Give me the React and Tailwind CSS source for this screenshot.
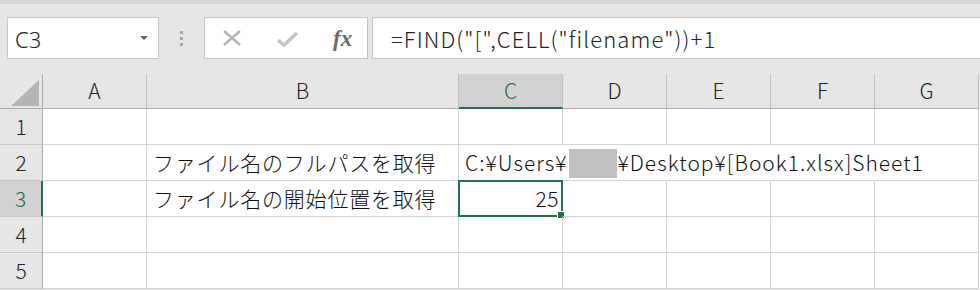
import React from "react";

const cols = [
  { k: "A", w: "w-[104px]" },
  { k: "B", w: "w-[312px]" },
  { k: "C", w: "w-[104px]" },
  { k: "D", w: "w-[104px]" },
  { k: "E", w: "w-[104px]" },
  { k: "F", w: "w-[104px]" },
  { k: "G", w: "w-[104px]" },
];

const jp = { fontFamily: '"Noto Sans CJK JP", "Noto Sans", sans-serif' };

function Cell({ row, col }) {
  const noRight = row === 2 && ["C", "D", "E", "F"].includes(col.k);
  let content = null;

  if (col.k === "B" && row === 2) content = "ファイル名のフルパスを取得";
  if (col.k === "B" && row === 3) content = "ファイル名の開始位置を取得";

  if (col.k === "C" && row === 2) {
    content = (
      <span className="whitespace-nowrap tracking-[1px]">
        C:¥Users¥
        <span className="inline-block w-[48px] h-[29px] bg-[#c0c0c0] align-[-7px] ml-[1px] mr-[1px]" />
        ¥Desktop¥[Book1.xlsx]Sheet1
      </span>
    );
  }

  const selected = col.k === "C" && row === 3;

  return (
    <div
      className={`relative h-full shrink-0 ${col.w} border-b border-[#d4d4d4] ${
        noRight ? "border-r border-r-transparent" : "border-r"
      } flex items-center ${selected ? "justify-end pr-[3px]" : "pl-[6px]"}`}
    >
      {content && (
        <span className="whitespace-nowrap text-[21px] font-light text-[#111] tracking-[0.8px]">{content}</span>
      )}
      {selected && (
        <>
          <span className="text-[21px] font-light text-[#111] tracking-[0.5px]">25</span>
          <div className="absolute -left-[1px] -top-[1px] w-[105px] h-[37px] border-2 border-[#217346]" />
          <div className="absolute -right-[3px] -bottom-[3px] w-[6px] h-[6px] bg-[#217346] border border-white box-content" />
        </>
      )}
    </div>
  );
}

export default function App() {
  const rows = [1, 2, 3, 4, 5];

  return (
    <div className="w-[980px] h-[290px] overflow-hidden bg-[#e6e6e6] text-[#222]" style={jp}>
      {/* top strip */}
      <div className="h-[4px] bg-[#d6d6d6]" />

      {/* formula bar row */}
      <div className="flex items-start mt-[13px] h-[42px]">
        <div className="ml-[7px] w-[152px] h-[42px] bg-white border border-[#c6c6c6] flex items-center justify-between pl-[7px] pr-[10px]">
          <span className="text-[22px] text-[#222] font-light pt-[3px]" style={{ fontFamily: '"Noto Sans", sans-serif' }}>
            C3
          </span>
          <svg width="8" height="5" viewBox="0 0 8 5">
            <path d="M0 0 L8 0 L4 4 Z" fill="#666" />
          </svg>
        </div>

        <div className="w-[45px] h-[42px] flex flex-col items-center justify-center gap-[3px]">
          <div className="w-[3px] h-[3px] bg-[#a6a6a6]" />
          <div className="w-[3px] h-[3px] bg-[#a6a6a6]" />
          <div className="w-[3px] h-[3px] bg-[#a6a6a6]" />
        </div>

        <div className="w-[164px] h-[42px] bg-white border border-[#c6c6c6] flex items-center">
          <svg className="ml-[18px]" width="18" height="16" viewBox="0 0 18 16">
            <path d="M1 1 L17 15 M17 1 L1 15" stroke="#b3b3b3" strokeWidth="2.4" />
          </svg>
          <svg className="ml-[36px] mt-[3px]" width="21" height="15" viewBox="0 0 21 15">
            <path d="M1 8 L7 13 L20 1" stroke="#c4c4c4" strokeWidth="3.5" fill="none" />
          </svg>
          <span
            className="ml-[35px] text-[23px] italic font-bold text-[#6b6b6b] leading-none"
            style={{ fontFamily: '"Liberation Serif", "DejaVu Serif", serif' }}
          >
            fx
          </span>
        </div>

        <div className="ml-[4px] flex-1 h-[42px] bg-white border border-[#c6c6c6] border-r-0 flex items-center pl-[18px]">
          <span className="text-[22px] font-light text-[#222] whitespace-nowrap tracking-[1.1px]">
            =FIND("[",CELL("filename"))+1
          </span>
        </div>
      </div>

      {/* grid */}
      <div className="mt-[15px]">
        {/* column header */}
        <div className="flex h-[35px]">
          <div className="relative w-[43px] shrink-0 border-r border-b border-[#ababab] bg-[#e6e6e6]">
            <svg className="absolute left-[11px] top-[6px]" width="28" height="26" viewBox="0 0 28 26">
              <path d="M28 0 L28 26 L0 26 Z" fill="#b4b4b4" />
            </svg>
          </div>
          {cols.map((c) => (
            <div
              key={c.k}
              className={`${c.w} shrink-0 flex items-center justify-center text-[21px] font-light border-r border-[#c0c0c0] ${
                c.k === "C"
                  ? "bg-[#d2d2d2] text-[#1e6b43] border-b-2 border-b-[#217346]"
                  : "bg-[#e6e6e6] text-[#222] border-b border-b-[#ababab]"
              }`}
            >
              {c.k}
            </div>
          ))}
        </div>

        {/* body */}
        {rows.map((r) => (
          <div key={r} className="flex h-[36px] bg-white">
            <div
              className={`w-[43px] shrink-0 flex items-center justify-center text-[21px] font-light border-b border-b-[#c8c8c8] ${
                r === 3
                  ? "bg-[#d2d2d2] text-[#1e6b43] border-r-2 border-r-[#217346]"
                  : "bg-[#e6e6e6] text-[#222] border-r border-r-[#ababab]"
              }`}
            >
              {r}
            </div>
            {cols.map((c) => (
              <Cell key={c.k} row={r} col={c} />
            ))}
          </div>
        ))}
      </div>
    </div>
  );
}
